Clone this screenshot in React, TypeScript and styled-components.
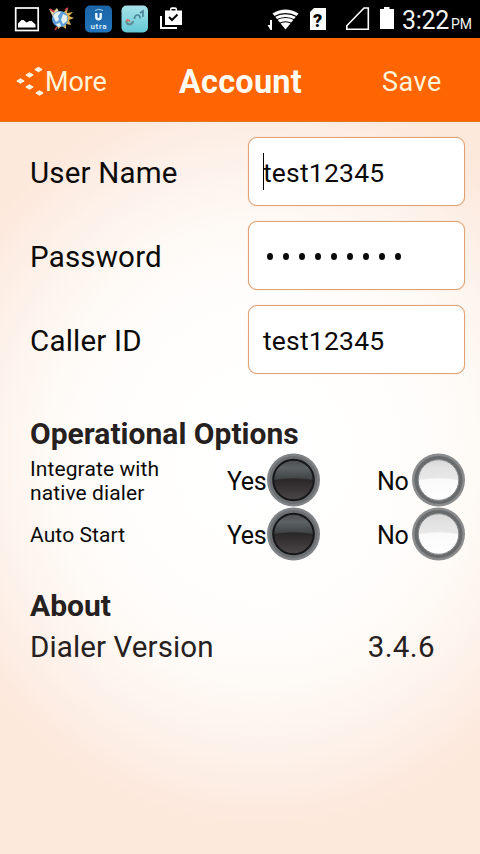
import React from "react";
import styled, { createGlobalStyle } from "styled-components";

const GlobalStyle = createGlobalStyle`
  * { box-sizing: border-box; }
  body { margin: 0; background: #fde8dc; }
`;

const Screen = styled.div`
  width: 480px;
  height: 854px;
  display: flex;
  flex-direction: column;
  overflow: hidden;
  font-family: Roboto, "Liberation Sans", sans-serif;
  color: #0c0a09;
  background: radial-gradient(ellipse 345px 370px at 262px 455px, #ffffff 0%, #fffefd 38%, #fefaf6 62%, #fdf1e9 82%, #fde8dc 100%);
`;

const StatusBar = styled.div`
  height: 38px;
  flex: none;
  display: flex;
  justify-content: space-between;
  background: #000;
  color: #f4f4f4;
`;

const Clock = styled.div`
  display: flex;
  align-items: baseline;
  width: 78px;
  padding-top: 6px;
  font-size: 25px;
  line-height: 29px;
  letter-spacing: -0.3px;
`;

const Meridiem = styled.span`
  font-size: 14px;
  margin-left: 2px;
  letter-spacing: 0;
`;

const StatusRight = styled.div`
  display: flex;
`;

const Header = styled.header`
  height: 84px;
  flex: none;
  display: grid;
  grid-template-columns: 140px 200px 140px;
  align-items: center;
  background: #ff6502;
  border-bottom: 1px solid #e0741f;
  color: #fff3d8;
  padding-top: 4px;
`;

const HeaderAction = styled.button<{ $inset: number; $spacing: number }>`
  display: flex;
  align-items: center;
  border: 0;
  padding: 0 0 0 ${(p) => p.$inset}px;
  background: none;
  color: inherit;
  font: 400 27px/32px Roboto, "Liberation Sans", sans-serif;
  letter-spacing: ${(p) => p.$spacing}px;
`;

const Title = styled.h1`
  margin: 0;
  padding: 0 0 0 1px;
  text-align: center;
  font-size: 32.5px;
  line-height: 38px;
  font-weight: 700;
  letter-spacing: 0.2px;
  color: #fffaf0;
`;

const Form = styled.div`
  display: flex;
  flex-direction: column;
  gap: 15px;
  padding: 15px 15px 0 30px;
`;

const FieldRow = styled.label`
  display: flex;
  align-items: center;
  justify-content: space-between;
  height: 69px;
  font-size: 29.5px;
  letter-spacing: 0.2px;
`;

const FieldName = styled.span`
  padding-top: 2px;
`;

const FieldBox = styled.div`
  width: 217px;
  height: 69px;
  display: flex;
  align-items: center;
  padding: 2px 0 0 14px;
  border: 1.5px solid #e0a274;
  border-radius: 9px;
  background: #fff;
  box-shadow: 0 0 1px #e6a87c;
  font-size: 26.5px;
`;

const Caret = styled.span`
  width: 1px;
  height: 37px;
  background: #000;
  margin: 0 -1px 2px 0;
`;

const Dots = styled.div`
  display: flex;
  gap: 10px;
  padding-left: 4px;
`;

const Dot = styled.span`
  width: 6px;
  height: 7px;
  border-radius: 50%;
  background: #0c0a09;
`;

const SectionTitle = styled.h2<{ $top: number }>`
  margin: ${(p) => p.$top}px 0 0 30px;
  font-size: 30px;
  line-height: 36px;
  font-weight: 700;
  letter-spacing: 0.02px;
  color: #262120;
`;

const Options = styled.div`
  padding: 1px 15px 0 30px;
`;

const OptionRow = styled.div`
  display: grid;
  grid-template-columns: 197px 150px 88px;
  align-items: center;
  height: 54px;
`;

const OptionLabel = styled.div`
  padding-top: 2px;
  font-size: 21px;
  line-height: 24px;
  letter-spacing: 0.1px;
  white-space: pre-line;
`;

const Choice = styled.div<{ $gap: number }>`
  display: flex;
  align-items: center;
  gap: ${(p) => p.$gap}px;
  font-size: 25px;
  letter-spacing: -0.4px;
  white-space: nowrap;
`;

const ChoiceText = styled.span<{ $width: number }>`
  width: ${(p) => p.$width}px;
  padding-top: 2px;
`;

const Version = styled.div`
  display: flex;
  justify-content: space-between;
  padding: 3px 45px 0 30px;
  font-size: 29.5px;
  line-height: 40px;
  letter-spacing: 0.12px;
  color: #262120;
`;

const VersionNumber = styled.span`
  letter-spacing: 0.4px;
`;

const StatusApps = () => (
  <svg width="190" height="38">
    <defs>
      <linearGradient id="blue" x2="0" y2="1">
        <stop stopColor="#1b64a6" />
        <stop offset="1" stopColor="#2275bb" />
      </linearGradient>
      <linearGradient id="aqua" x2="0" y2="1">
        <stop stopColor="#a9e2e9" />
        <stop offset="1" stopColor="#62c8d5" />
      </linearGradient>
    </defs>
    <rect x="15.7" y="8" width="22.5" height="22.5" fill="none" stroke="#fff" strokeWidth="1.7" />
    <path d="M18 27.5v-4l3.5-3.5 2 0 3 2.5 3-1.5 2 0 4 3.5v3z" fill="#fff" />
    <path d="M64 12l4-4-1 5 6-1-4 4 5 2-5 2 2 5-5-1 0 5-4-3-4 3-1-4z" fill="#d9b355" />
    <path d="M49 9l5 2 3-3 2 4-6 5z" fill="#e3d3a0" />
    <circle cx="60" cy="19" r="8" fill="#5e9ed8" />
    <path d="M53 16c2-4 6-5 8-4l-3 4 1 4-3 2zM63 14l4 2 0 5-4 3-2-4zM56 24l4-1 1 3-3 1z" fill="#e6f0ee" />
    <path d="M50 9l4 3M55 30l2-3M65 10l3-2" stroke="#c8414a" strokeWidth="1.6" />
    <rect x="85" y="5.5" width="27" height="27" rx="5" fill="url(#blue)" />
    <path d="M96.3 13v4a2.2 2.2 0 0 0 4.4 0v-4" fill="none" stroke="#edf7ff" strokeWidth="2.4" />
    <path d="M95 10.5q3.5-2.5 8 0" fill="none" stroke="#a8d4f4" />
    <text x="90.5" y="28.5" textLength="16" fontFamily="Roboto, sans-serif" fontSize="8" fontWeight="500" fill="#e7f4ff">utra</text>
    <rect x="121.5" y="5.5" width="26.5" height="27" rx="5" fill="url(#aqua)" />
    <path d="M126.5 21c0 4.5 6 4.5 6.5 0" fill="none" stroke="#5d8e97" strokeWidth="2.2" />
    <path d="M126.5 21.5c0-2 2-2 3.5 0" fill="none" stroke="#d17568" strokeWidth="1.8" />
    <path d="M134.5 19c0-5 6-5.500 5.500-.5M140 13l3-2v6" fill="none" stroke="#4a8599" strokeWidth="1.7" />
    <path d="M161 16v12h16" fill="none" stroke="#fff" strokeWidth="2" />
    <path d="M165 10.5h5V9q0-1.800 2-1.800h3q2 0 2 1.800v1.500h5V25h-17zM171.500 10.500h4V9h-4z" fill="#fff" fillRule="evenodd" />
    <path d="M169 17l3 3 5.500-5.500" fill="none" stroke="#050505" strokeWidth="2" />
  </svg>
);

const StatusSignals = () => (
  <svg width="137" height="38">
    <g fill="#fff">
      <path d="M7 20h2v10H7.500L4.500 25H7z" />
      <path d="M22.500 29.500L9.500 13.500Q22.500 5.500 35.500 13.500z" />
      <path d="M47 12l4-4h12v22H47z" />
      <path d="M117 9h4V7h5.500v2h4.500v20h-14z" />
    </g>
    <path d="M11 16.800q11.500-6.500 23 0M13 20q9.500-5 19 0M16 23.500q6.500-3.500 13 0" fill="none" stroke="#000" strokeWidth="1.2" />
    <text x="50" y="26.500" fontFamily="Roboto, sans-serif" fontWeight="900" fontSize="18" fill="#000">?</text>
    <path d="M83.800 29.200v-3.500L101 8h4.300v21.200z" fill="none" stroke="#fff" strokeWidth="1.6" />
  </svg>
);

const Signals = styled.div`
  width: 137px;
  margin-left: -2px;
  margin-right: 2px;
`;

const MoreIcon = () => (
  <svg width="29" height="34" fill="#fff3df" stroke="#fff3df" strokeWidth="1" strokeLinejoin="round">
    <path d="M.8 16l3.700-2.300L8.200 16l-3.700 2.300zM9.800 10l3.700-2.300 3.700 2.300-3.700 2.300zM18.800 4.500l3.700-2.300 3.700 2.300-3.700 2.300zM9.800 22l3.700-2.300 3.700 2.300-3.700 2.300zM19.800 28l3.700-2.300 3.700 2.300-3.700 2.300z" />
  </svg>
);

const Radio = ({ selected }: { selected?: boolean }) => {
  const id = selected ? "dark" : "light";
  return (
    <svg width="53" height="54" viewBox="0 0 53 54">
      <defs>
        <linearGradient id={`${id}-gloss`} x2="0" y2="1">
          <stop stopColor={selected ? "#4a4d50" : "#d8d8d8"} />
          <stop offset=".4" stopColor={selected ? "#5d6265" : "#e2e2e2"} />
          <stop offset="1" stopColor={selected ? "#3c4042" : "#e8e8e8"} />
        </linearGradient>
        <linearGradient id={`${id}-base`} x2="0" y2="1">
          <stop offset=".5" stopColor={selected ? "#2b2829" : "#fafafa"} />
          <stop offset="1" stopColor={selected ? "#4c4749" : "#ffffff"} />
        </linearGradient>
      </defs>
      <circle cx="26.5" cy="27" r="26.5" fill={selected ? "#808385" : "#8a8b8c"} />
      <circle cx="26.5" cy="27" r="24" fill={selected ? "#6c6f71" : "#696a6b"} />
      <circle cx="26.5" cy="27" r="20.5" fill={`url(#${id}-base)`} />
      <path d="M6.5 27a20 20 0 0 1 40 0q-20-3.500-40 0z" fill={`url(#${id}-gloss)`} />
      <circle cx="26.5" cy="27" r="20.3" fill="none" stroke={selected ? "#141617" : "#7e7f80"} strokeWidth={selected ? 2 : 1} />
    </svg>
  );
};

const Option = ({ label }: { label: string }) => (
  <OptionRow>
    <OptionLabel>{label}</OptionLabel>
    <Choice $gap={0}>
      <ChoiceText $width={39.5}>Yes</ChoiceText>
      <Radio selected />
    </Choice>
    <Choice $gap={4.5}>
      <ChoiceText $width={30}>No</ChoiceText>
      <Radio />
    </Choice>
  </OptionRow>
);

export default function App() {
  return (
    <>
      <GlobalStyle />
      <Screen>
        <StatusBar>
          <StatusApps />
          <StatusRight>
            <Signals><StatusSignals /></Signals>
            <Clock>3:22<Meridiem>PM</Meridiem></Clock>
          </StatusRight>
        </StatusBar>
        <Header>
          <HeaderAction $inset={16} $spacing={-0.1}><MoreIcon />More</HeaderAction>
          <Title>Account</Title>
          <HeaderAction $inset={42} $spacing={0.5}>Save</HeaderAction>
        </Header>
        <Form>
          <FieldRow><FieldName>User Name</FieldName><FieldBox><Caret />test12345</FieldBox></FieldRow>
          <FieldRow>
            <FieldName>Password</FieldName>
            <FieldBox><Dots>{Array.from({ length: 9 }, (_, i) => <Dot key={i} />)}</Dots></FieldBox>
          </FieldRow>
          <FieldRow><FieldName>Caller ID</FieldName><FieldBox>test12345</FieldBox></FieldRow>
        </Form>
        <SectionTitle $top={42}>Operational Options</SectionTitle>
        <Options>
          <Option label={"Integrate with\nnative dialer"} />
          <Option label="Auto Start" />
        </Options>
        <SectionTitle $top={27}>About</SectionTitle>
        <Version><span>Dialer Version</span><VersionNumber>3.4.6</VersionNumber></Version>
      </Screen>
    </>
  );
}
